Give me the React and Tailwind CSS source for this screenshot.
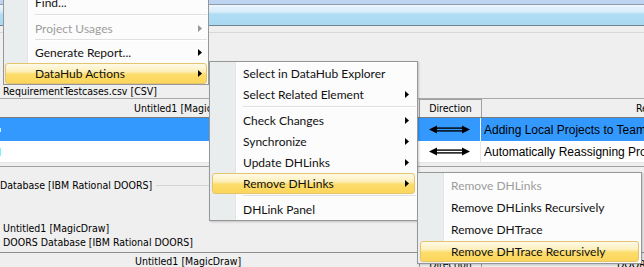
function SubArrow() {
  return (
    <svg width="4" height="7" viewBox="0 0 4 7" className="shrink-0">
      <polygon points="0,0 4,3.5 0,7" fill="#000" />
    </svg>
  );
}

function DoubleArrow() {
  return (
    <svg width="41" height="9" viewBox="0 0 41 9">
      <polygon points="0,4.5 8,0.5 8,8.5" fill="#000" />
      <polygon points="41,4.5 33,0.5 33,8.5" fill="#000" />
      <rect x="7" y="2.4" width="27" height="1.4" fill="#000" />
      <rect x="7" y="5.2" width="27" height="1.4" fill="#000" />
    </svg>
  );
}

const hot =
  "border-[#e5c46d] bg-[linear-gradient(to_bottom,#fefae8_0%,#fdf0bd_38%,#fcdc6b_55%,#fcd65b_100%)]";

function Item({ label, h, pad, sub, disabled, active }) {
  return (
    <div
      className={`flex items-center justify-between border rounded-[3px] ${h} ${pad} ${
        active ? hot : "border-transparent"
      }`}
    >
      <span className={disabled ? "text-[#9d9d9d]" : "text-[#111]"}>{label}</span>
      {sub && (disabled ? <span className="opacity-40"><SubArrow /></span> : <SubArrow />)}
    </div>
  );
}

function Sep({ h, ml, top }) {
  return (
    <div className={`${h} ${ml} mr-[1px]`}>
      <div className={`${top} h-[1px] bg-[#e0e0e0]`} />
      <div className="h-[1px] bg-white" />
    </div>
  );
}

const menuFont = "[font-family:Lato,'Noto_Sans',sans-serif] font-stretch-normal text-[12px] leading-none";
const rowFont = "[font-family:'Liberation_Sans',Arial,sans-serif] font-stretch-normal text-[12px]";

export default function App() {
  return (
    <div className="relative w-[644px] h-[267px] overflow-hidden bg-[#efefef] text-black [font-family:'DejaVu_Sans',sans-serif] font-stretch-condensed text-[10.5px] leading-none">
      {/* title band */}
      <div className="h-[4px] bg-[#bed4f2]" />
      <div className="h-[1px] bg-[#8c9bad]" />
      <div className="h-[20px] bg-[linear-gradient(to_bottom,#f3f9fe_0px,#e3f2fc_2px,#d6edfa_7px,#b0ddf4_9px,#a9daf3_100%)]" />
      <div className="h-[1px] bg-[#74848f]" />
      <div className="h-[6px]" />
      <div className="h-[1px] bg-[#d8d8d8]" />
      <div className="h-[51px]" />

      {/* source label */}
      <div className="h-[14px] flex items-center pl-[3px] whitespace-nowrap">RequirementTestcases.csv [CSV]</div>
      <div className="h-[1px] bg-[#a9a9a9]" />

      {/* header */}
      <div className="flex h-[19px] border-b border-[#7a7a7a]">
        <div className="w-[417px] flex items-center pl-[134px] whitespace-nowrap">Untitled1 [MagicDraw]</div>
        <div className="w-[2px]" />
        <div className="w-[63px] border-x border-t border-[#a0a0a0] bg-[#f0f0f0] flex items-center justify-center">
          Direction
        </div>
        <div className="flex-1 flex items-center pl-[154px] whitespace-nowrap overflow-hidden">
          RequirementTestcases.csv [CSV]
        </div>
      </div>

      {/* rows */}
      <div className="flex h-[23px] bg-[#3399ff]">
        <div className="w-[419px] flex items-center">
          <div className="w-[1px] h-[4px] bg-[#c8f0ff]" />
        </div>
        <div className="w-[62px] flex items-center justify-center border-r border-white">
          <DoubleArrow />
        </div>
        <div className={`flex-1 flex items-center pl-[3px] whitespace-nowrap overflow-hidden ${rowFont}`}>
          Adding Local Projects to Teamwork Server
        </div>
      </div>
      <div className="flex h-[22px] bg-white border-b border-[#e6e6e6]">
        <div className="w-[419px] flex items-center">
          <div className="w-[1px] h-[8px] bg-[#7ff2ff]" />
        </div>
        <div className="w-[62px] flex items-center justify-center border-r border-[#e6e6e6]">
          <DoubleArrow />
        </div>
        <div className={`flex-1 flex items-center pl-[3px] whitespace-nowrap overflow-hidden ${rowFont}`}>
          Automatically Reassigning Projects
        </div>
      </div>
      <div className="h-[3px]" />
      <div className="h-[1px] bg-[#a3a3a3]" />

      {/* lower area */}
      <div className="h-[11px]" />
      <div className="flex items-center h-[14px] w-[417px]">
        <span className="whitespace-nowrap">Database [IBM Rational DOORS]</span>
        <div className="flex-1 h-[1px] bg-[#d4d4d4] ml-[4px]" />
      </div>
      <div className="h-[29px]" />
      <div className="h-[14px] flex items-center pl-[3px] whitespace-nowrap">Untitled1 [MagicDraw]</div>
      <div className="h-[14px] flex items-center pl-[3px] whitespace-nowrap">DOORS Database [IBM Rational DOORS]</div>
      <div className="h-[3px]" />
      <div className="h-[1px] bg-[#8e8e8e]" />
      <div className="flex h-[16px]">
        <div className="w-[417px] flex items-center pl-[135px] whitespace-nowrap">Untitled1 [MagicDraw]</div>
        <div className="w-[2px]" />
        <div className="w-[63px] border-x border-[#a0a0a0] flex items-end justify-center">Direction</div>
        <div className="flex-1 flex items-end pl-[135px] whitespace-nowrap overflow-hidden">
          DOORS Database [IBM Rational DOORS]
        </div>
      </div>

      {/* context menu */}
      <div
        className={`absolute left-[3px] top-[-10px] w-[206px] border border-[#979797] pt-[1px] bg-[linear-gradient(to_right,#e9eded_23px,#e2e3e3_23px,#e2e3e3_24px,#ffffff_24px,#ffffff_25px,#fcfcfc_25px)] ${menuFont}`}
      >
        <Item label="Find..." h="h-[21px]" pad="mx-[1px] pl-[29px] pr-[4px]" />
        <Sep h="h-[4px]" ml="ml-[31px]" top="mt-[1px]" />
        <Item label="Project Usages" h="h-[21px]" pad="mx-[1px] pl-[29px] pr-[4px]" sub disabled />
        <Sep h="h-[3px]" ml="ml-[31px]" top="mt-0" />
        <Item label="Generate Report..." h="h-[21px]" pad="mx-[1px] pl-[29px] pr-[4px]" sub />
        <Item label="DataHub Actions" h="h-[21px]" pad="mx-[1px] pl-[29px] pr-[4px]" sub active />
      </div>

      {/* DataHub Actions submenu */}
      <div
        className={`absolute left-[209px] top-[61px] w-[209px] border border-[#979797] pt-[1px] shadow-[1px_1px_2px_rgba(0,0,0,0.2)] bg-[linear-gradient(to_right,#e9eded_25px,#e2e3e3_25px,#e2e3e3_26px,#ffffff_26px,#ffffff_27px,#fcfcfc_27px)] ${menuFont}`}
      >
        <Item label="Select in DataHub Explorer" h="h-[21px]" pad="mx-[2px] pl-[30px] pr-[5px]" />
        <Item label="Select Related Element" h="h-[21px]" pad="mx-[2px] pl-[30px] pr-[5px]" sub />
        <Sep h="h-[4px]" ml="ml-[33px]" top="mt-[1px]" />
        <Item label="Check Changes" h="h-[21px]" pad="mx-[2px] pl-[30px] pr-[5px]" sub />
        <Item label="Synchronize" h="h-[21px]" pad="mx-[2px] pl-[30px] pr-[5px]" sub />
        <Item label="Update DHLinks" h="h-[21px]" pad="mx-[2px] pl-[30px] pr-[5px]" sub />
        <Item label="Remove DHLinks" h="h-[21px]" pad="mx-[2px] pl-[30px] pr-[5px]" sub active />
        <Sep h="h-[5px]" ml="ml-[33px]" top="mt-[1px]" />
        <Item label="DHLink Panel" h="h-[20px]" pad="mx-[2px] pl-[30px] pr-[5px]" />
      </div>

      {/* Remove DHLinks submenu */}
      <div
        className={`absolute left-[417px] top-[172px] w-[225px] border border-[#979797] pt-[2px] shadow-[1px_1px_2px_rgba(0,0,0,0.2)] bg-[linear-gradient(to_right,#e9eded_25px,#e2e3e3_25px,#e2e3e3_26px,#ffffff_26px,#ffffff_27px,#fcfcfc_27px)] ${menuFont}`}
      >
        <Item label="Remove DHLinks" h="h-[22px]" pad="mx-[2px] pl-[30px] pr-[5px]" disabled />
        <Item label="Remove DHLinks Recursively" h="h-[22px]" pad="mx-[2px] pl-[30px] pr-[5px]" />
        <Item label="Remove DHTrace" h="h-[22px]" pad="mx-[2px] pl-[30px] pr-[5px]" />
        <Item label="Remove DHTrace Recursively" h="h-[21px]" pad="mx-[2px] pl-[30px] pr-[5px]" active />
        <div className="h-[1px]" />
      </div>
    </div>
  );
}
